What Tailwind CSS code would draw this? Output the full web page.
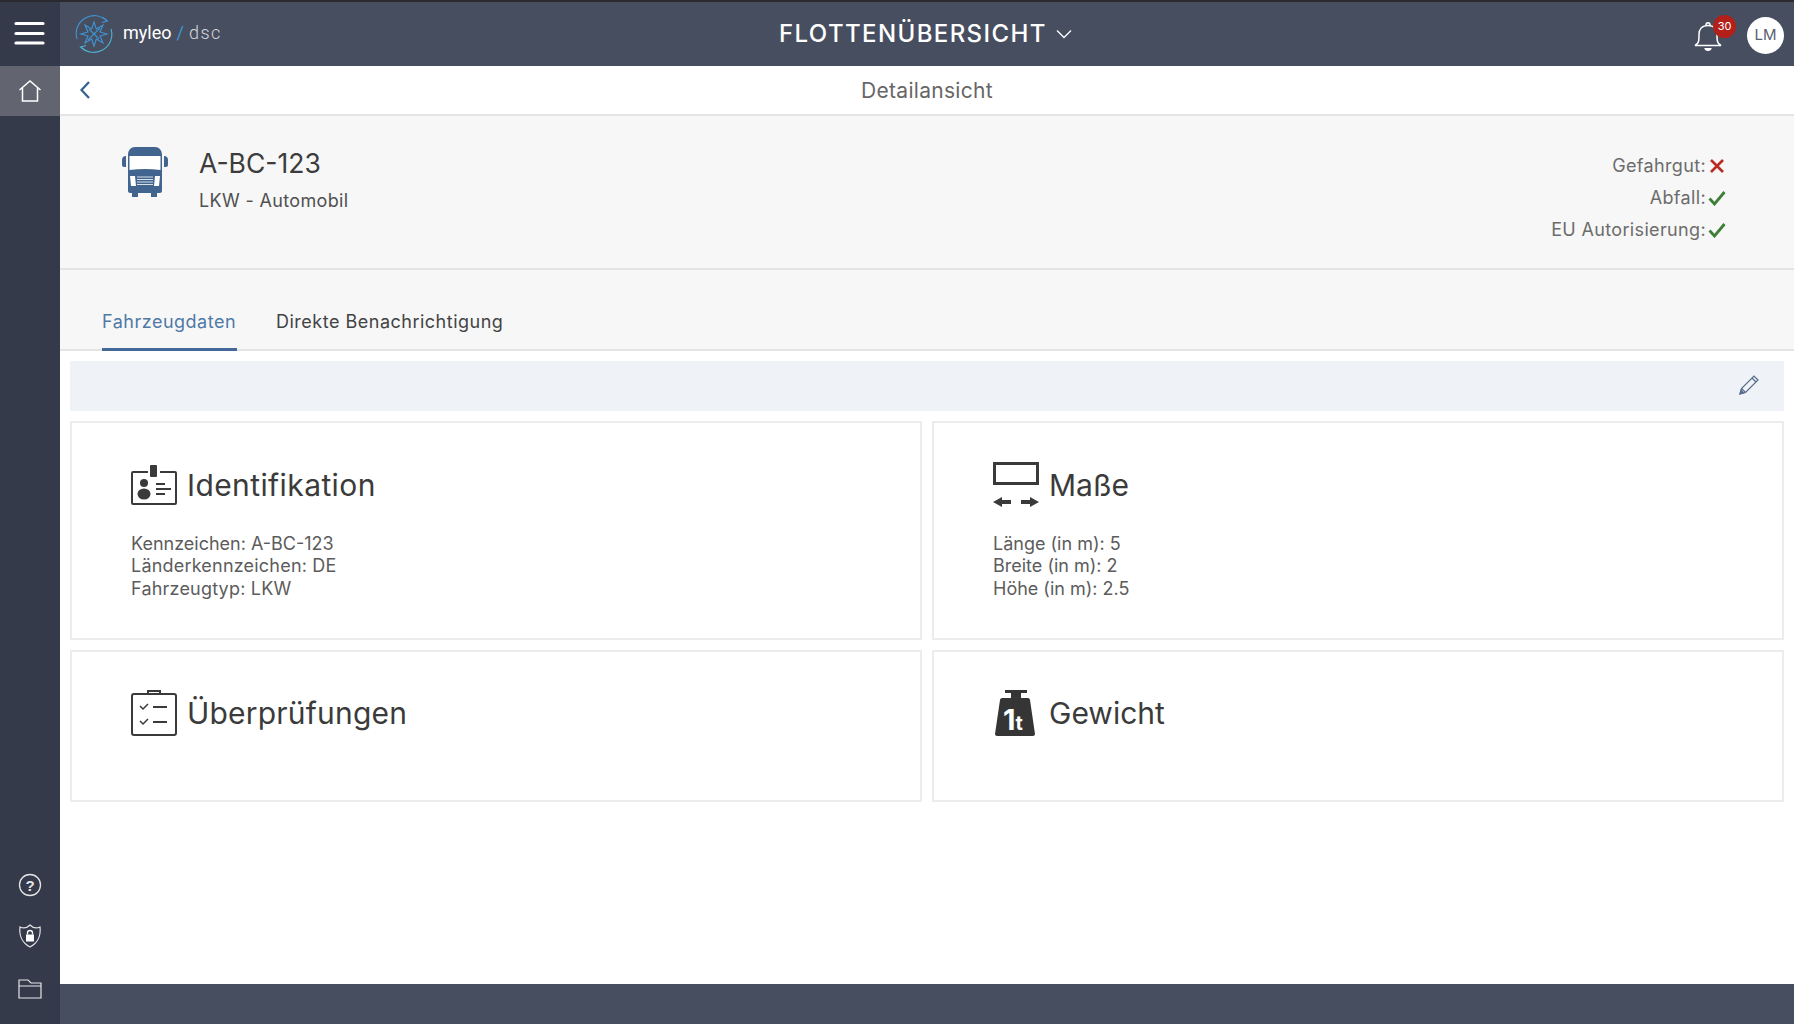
<!DOCTYPE html>
<html lang="de">
<head>
<meta charset="utf-8">
<script src="https://cdn.jsdelivr.net/npm/@tailwindcss/browser@4"></script>
</head>
<body class="font-['Inter','Liberation_Sans',sans-serif] bg-white">
<div class="flex w-[1794px] h-[1024px] overflow-hidden">
  <aside class="w-[60px] shrink-0 flex flex-col bg-[#353a4b]">
    <div class="h-[66px] flex items-center justify-center border-t-2 border-[#2b2b2f] pr-[2px]">
      <svg width="31" height="24" viewBox="0 0 31 24" class="-mt-[2px]"><path d="M2 2.500h27M2 12.500h27M2 22h27" stroke="#fff" stroke-width="3.200" stroke-linecap="round"/></svg>
    </div>
    <div class="h-[50px] bg-[#62646f] flex items-center justify-center">
      <svg width="24" height="24" viewBox="0 0 24 24" fill="none" stroke="#fff" stroke-width="1.500"><path d="M1.500 11 12 2l10.500 9M4.500 9v13h15V9"/></svg>
    </div>
    <div class="mt-auto flex flex-col items-center pb-[25px]">
      <svg width="24" height="24" viewBox="0 0 24 24" fill="none" class="mb-[27px]"><circle cx="12" cy="12" r="10.500" stroke="#e5e5e8" stroke-width="1.300"/><text x="12" y="17.500" text-anchor="middle" font-size="15" font-weight="700" fill="#e5e5e8" font-family="Liberation Sans">?</text></svg>
      <svg width="24" height="24" viewBox="0 0 24 24" fill="none" class="mb-[31px]"><path d="M2 3c3 1.500 7 1 10-2 3 3 7 3.500 10 2 1 8-2 16-10 20C4 19 1 11 2 3Z" stroke="#e5e5e8" stroke-width="1.200"/><rect x="8" y="10.500" width="8" height="7" fill="#fff"/><path d="M9.500 10.500V9a2.500 2.500 0 0 1 5 0v1.500" stroke="#fff" stroke-width="1.300"/></svg>
      <svg width="24" height="20" viewBox="0 0 24 20" fill="none" stroke="#e5e5e8" stroke-width="1.200"><path d="M1 7V1h9l3 3h10v15H1V7h22"/></svg>
    </div>
  </aside>
  <div class="flex-1 flex flex-col min-w-0">
    <header class="h-[66px] shrink-0 bg-[#474e60] border-t-2 border-[#2b2b2f] relative flex items-center justify-between">
      <div class="flex items-center pl-[14px]">
        <svg width="40" height="40" viewBox="0 0 40 40" fill="none" stroke="#3f95d4" stroke-width="1.100">
          <path d="M33 7A18 18 0 0 0 3 25" /><path d="M29 3.500 33.500 7l-5.500 1.500" />
          <path d="M7 33A18 18 0 0 0 37 15" stroke="#4fb0cf"/><path d="M11 36.500 6.500 33l5.500-1.500" stroke="#4fb0cf"/>
          <path d="M20 8l2.300 7 6.700-4-3 7 7 2-7 2 3 7-6.700-4-2.300 7-2.300-7-6.700 4 3-7-7-2 7-2-3-7 6.700 4Z"/>
          <path d="M14 26 26 14M15 15l10 10" />
        </svg>
        <span class="ml-[9px] -mt-[2px] text-[18px] text-white font-['Roboto',sans-serif] flex items-center leading-none">myleo<span class="text-[#3f95d4] mx-[5px]">/</span><span class="text-[#d5d8de] font-light tracking-[1.500px]">dsc</span></span>
      </div>
      <div class="absolute left-[719px] top-[17px] flex items-center">
        <span class="text-[24px] leading-[30px] text-white font-medium tracking-[1.400px]">FLOTTENÜBERSICHT</span>
        <svg width="16" height="10" viewBox="0 0 16 10" fill="none" class="ml-[9px]" stroke="#fff" stroke-width="1.300"><path d="M1 1.500 8 8.500 15 1.500"/></svg>
      </div>
      <div class="flex items-center pr-[10px]">
        <div class="relative w-[30px] h-[32px] mr-[24px] mt-[4px]">
          <svg width="30" height="32" viewBox="0 0 30 32" fill="none" stroke="#fff" stroke-width="1.500"><path d="M2 25.500c4-2 4-5 4-11 0-5 3-9 9-9s9 4 9 9c0 6 0 9 4 11Z"/><path d="M12 28c.5 3 5.500 3 6 0" fill="#fff"/><path d="M13 5c0-3 4-3 4 0" /></svg>
          <span class="absolute left-[20px] -top-[5px] w-[23px] h-[23px] rounded-full bg-[#b3201a] text-white text-[11px] flex items-center justify-center">30</span>
        </div>
        <div class="w-[37px] h-[37px] mt-[2px] rounded-full bg-white text-[#5a6071] text-[15px] flex items-center justify-center">LM</div>
      </div>
    </header>
    <div class="h-[50px] shrink-0 bg-white border-b-2 border-[#e4e4e4] relative flex items-center justify-center">
      <svg width="12" height="20" viewBox="0 0 12 20" fill="none" class="absolute left-[19px] top-[14px]" stroke="#34618f" stroke-width="2.200"><path d="M10 2 2.500 10 10 18"/></svg>
      <span class="text-[21px] tracking-[0.3px] text-[#666666] mt-[1px]">Detailansicht</span>
    </div>
    <section class="h-[154px] shrink-0 bg-[#f7f7f7] border-b-2 border-[#e4e4e4] flex justify-between">
      <div class="flex pl-[61px] pt-[30px]">
        <svg width="48" height="52" viewBox="0 0 48 52">
          <path fill="#41658f" d="M7 9c0-5 3-8 7-8h20c4 0 7 3 7 8v36c0 1-1 2-2 2h-3v4h-6v-4H17v4h-6v-4H9c-1 0-2-1-2-2Z"/>
          <path fill="#41658f" d="M1 14c0-2 1-4 4-4v11H3c-1 0-2-1-2-2ZM47 14c0-2-1-4-4-4v11h2c1 0 2-1 2-2Z"/>
          <path fill="#fff" d="M8.500 10h31v14c-10-1.500-21-1.500-31 0Z"/>
          <path fill="#fff" d="M9 30h5l1 10h-5ZM39 30h-5l-1 10h5Z"/>
          <path stroke="#fff" stroke-width=".8" d="M16 31h16M16 33.500h16M16 36h16M16 38.500h16"/>
        </svg>
        <div class="ml-[30px]">
          <div class="text-[26.500px] leading-[36px] text-[#3c3c3c] -mt-[1px]">A-BC-123</div>
          <div class="text-[18px] leading-[24px] tracking-[0.35px] text-[#505050] mt-[8px]">LKW - Automobil</div>
        </div>
      </div>
      <div class="pr-[69px] pt-[34px] flex flex-col items-end text-[18px] leading-[32px] tracking-[0.35px] text-[#6c6c6c]">
        <div class="flex items-center h-[32px]">Gefahrgut:<svg width="16" height="16" viewBox="0 0 16 16" class="ml-[3px]" fill="none" stroke="#b82a22" stroke-width="2.600"><path d="M2 2l12 12M14 2 2 14"/></svg></div>
        <div class="flex items-center h-[32px]">Abfall:<svg width="18" height="16" viewBox="0 0 18 16" class="ml-[2px] mr-[-1px]" fill="none" stroke="#3d7f36" stroke-width="2.800"><path d="M1.500 8.500 6.500 14 16.500 2"/></svg></div>
        <div class="flex items-center h-[32px]">EU Autorisierung:<svg width="18" height="16" viewBox="0 0 18 16" class="ml-[2px] mr-[-1px]" fill="none" stroke="#3d7f36" stroke-width="2.800"><path d="M1.500 8.500 6.500 14 16.500 2"/></svg></div>
      </div>
    </section>
    <nav class="h-[81px] shrink-0 bg-[#f7f7f7] border-b-2 border-[#e4e4e4] flex items-end pl-[42px] gap-[39px]">
      <div class="h-[51px] -mb-[2px] border-b-[3px] border-[#42699a] text-[18px] leading-[24px] tracking-[0.5px] text-[#4f79a6] pt-[10px] w-[135px]">Fahrzeugdaten</div>
      <div class="h-[51px] -mb-[2px] text-[18px] leading-[24px] tracking-[0.5px] text-[#434343] pt-[10px]">Direkte Benachrichtigung</div>
    </nav>
    <main class="flex-1 px-[10px] pt-[10px] bg-white">
      <div class="h-[50px] bg-[#eff2f7] flex items-center justify-end pr-[24px]">
        <svg width="22" height="22" viewBox="0 0 22 22" fill="none" stroke="#566c8b" stroke-width="1.200" class="-mt-[2px]"><path d="M2 20l1.500-5.500L16 2l4 4L7.500 18.500Z"/><path d="M14 4l4 4M3.500 14.500l4 4"/><path d="M2 20l1-3.500 2.500 2.500Z" fill="#566c8b"/></svg>
      </div>
      <div class="grid grid-cols-2 gap-[10px] mt-[10px] grid-rows-[219px_152px]">
        <article class="border-2 border-[#ececec] pl-[59px] pt-[40px]">
          <div class="flex items-center h-[44px]">
            <svg width="46" height="40" viewBox="0 0 46 40" fill="none" stroke="#3a3a3a" stroke-width="2"><path d="M17 7H2a1 1 0 0 0-1 1v30a1 1 0 0 0 1 1h42a1 1 0 0 0 1-1V8a1 1 0 0 0-1-1H29"/><rect x="19" y="0" width="7" height="12" rx="1" fill="#3a3a3a" stroke="none"/><circle cx="13" cy="18" r="4" fill="#3a3a3a" stroke="none"/><ellipse cx="13" cy="29" rx="6.500" ry="5.500" fill="#3a3a3a" stroke="none"/><path d="M25 19h9M25 24h15M25 29h9" stroke-width="1.800"/></svg>
            <h2 class="ml-[10px] text-[30px] leading-[36px] tracking-[0.4px] text-[#3b3b3b]">Identifikation</h2>
          </div>
          <div class="mt-[26px] text-[18px] leading-[22.400px] text-[#5c5c5c]">
            <p>Kennzeichen: A-BC-123</p><p class="tracking-[0.2px]">Länderkennzeichen: DE</p><p class="tracking-[0.2px]">Fahrzeugtyp: LKW</p>
          </div>
        </article>
        <article class="border-2 border-[#ececec] pl-[59px] pt-[40px]">
          <div class="flex items-center h-[44px]">
            <svg width="46" height="46" viewBox="0 0 46 46" fill="none"><rect x="1.500" y="1.500" width="43" height="20" stroke="#3a3a3a" stroke-width="3"/><path d="M0 40l9-5v3h9v4H9v3ZM46 40l-9-5v3h-9v4h9v3Z" fill="#3a3a3a"/></svg>
            <h2 class="ml-[10px] text-[30px] leading-[36px] text-[#3b3b3b]">Maße</h2>
          </div>
          <div class="mt-[26px] text-[18px] leading-[22.400px] text-[#5c5c5c]">
            <p>Länge (in m): 5</p><p>Breite (in m): 2</p><p>Höhe (in m): 2.5</p>
          </div>
        </article>
        <article class="border-2 border-[#ececec] pl-[59px] pt-[39px]">
          <div class="flex items-center h-[44px]">
            <svg width="46" height="46" viewBox="0 0 46 46" fill="none" stroke="#3a3a3a" stroke-width="2"><rect x="1" y="4" width="44" height="41" rx="2"/><path d="M17 4V1h12v3"/><path d="M9 16l3 3 5-5M9 31l3 3 5-5" stroke-width="1.500"/><path d="M22 17h14M22 32h14" stroke-width="2.200"/></svg>
            <h2 class="ml-[10px] text-[30px] leading-[36px] tracking-[0.2px] text-[#3b3b3b]">Überprüfungen</h2>
          </div>
        </article>
        <article class="border-2 border-[#ececec] pl-[59px] pt-[39px]">
          <div class="flex items-center h-[44px]">
            <div class="relative w-[46px] h-[46px] shrink-0">
              <svg width="46" height="46" viewBox="0 0 46 46"><path fill="#353535" d="M12 0h22v3h-6v5h7c1 0 2 1 2 2l5 34c0 1-1 2-2 2H4c-1 0-2-1-2-2l5-34c0-1 1-2 2-2h9V3h-6Z"/></svg>
              <span class="absolute left-[10px] top-[14px] text-white font-bold text-[29px] leading-[32px]">1<span class="text-[20px]">t</span></span>
            </div>
            <h2 class="ml-[10px] text-[30px] leading-[36px] text-[#3b3b3b]">Gewicht</h2>
          </div>
        </article>
      </div>
    </main>
    <footer class="h-[40px] shrink-0 bg-[#474e60]"></footer>
  </div>
</div>
</body>
</html>
